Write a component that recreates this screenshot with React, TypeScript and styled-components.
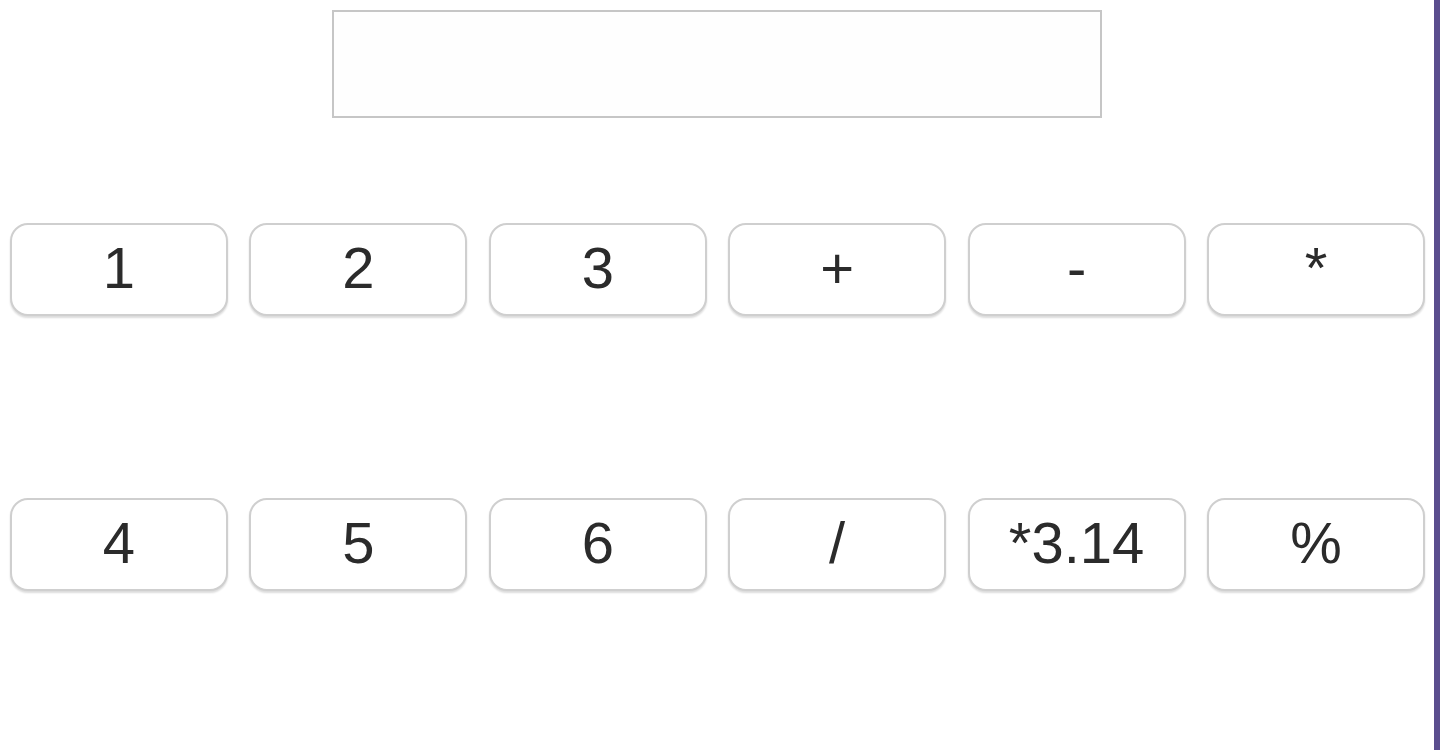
import styled, { createGlobalStyle } from 'styled-components';
import { useState } from 'react';

const GlobalStyle = createGlobalStyle`
  html, body {
    margin: 0;
    padding: 0;
    background: #ffffff;
  }
`;

const Window = styled.div`
  box-sizing: border-box;
  width: 1440px;
  height: 750px;
  border-right: 6px solid #5a4d8e;
  display: flex;
  flex-direction: column;
  align-items: center;
  padding-top: 10px;
  font-family: "Liberation Sans", Arial, sans-serif;
`;

const Display = styled.input`
  box-sizing: border-box;
  width: 770px;
  height: 108px;
  border: 2px solid #c6c6c6;
  outline: none;
  background: #fefefe;
  font-size: 58px;
  padding: 0 12px;
  font-family: inherit;
  color: #222;
`;

const Keypad = styled.div`
  align-self: flex-start;
  display: grid;
  grid-template-columns: repeat(6, 218px);
  grid-auto-rows: 93px;
  column-gap: 21.4px;
  row-gap: 182px;
  margin-top: 105px;
  margin-left: 10px;
`;

const Key = styled.button`
  box-sizing: border-box;
  border: 2px solid #cfcfcf;
  border-radius: 18px;
  background: #ffffff;
  box-shadow: 0 2px 2px rgba(0, 0, 0, 0.14);
  font-family: "Liberation Sans", Arial, sans-serif;
  font-size: 58px;
  color: #2b2b2b;
  cursor: pointer;
  display: flex;
  align-items: center;
  justify-content: center;
  padding: 0 0 4px;
`;

const keys = ['1', '2', '3', '+', '-', '*', '4', '5', '6', '/', '*3.14', '%'];

const App = () => {
  const [value, setValue] = useState('');

  const handleKey = (key: string) => {
    setValue(value + key);
  };

  return (
    <>
      <GlobalStyle />
      <Window>
        <Display value={value} onChange={(e) => setValue(e.target.value)} />
        <Keypad>
          {keys.map((key) => (
            <Key key={key} onClick={() => handleKey(key)}>
              {key}
            </Key>
          ))}
        </Keypad>
      </Window>
    </>
  );
};

export default App;
